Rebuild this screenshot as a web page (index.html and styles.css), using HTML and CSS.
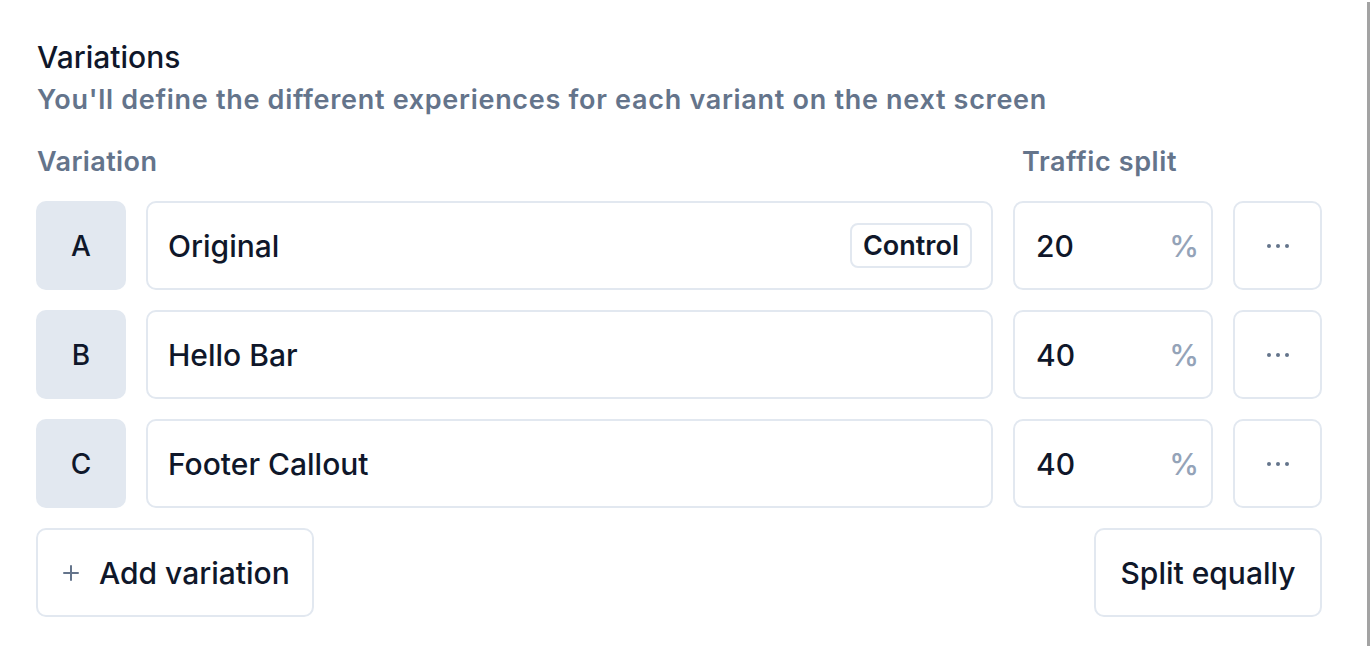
FILE: index.html
```html
<!DOCTYPE html>
<html lang="en">
<head>
<meta charset="utf-8">
<title>Variations</title>
<link rel="stylesheet" href="styles.css">
</head>
<body>
<div class="frame">
  <main class="content">
    <h2 class="title">Variations</h2>
    <p class="subtitle">You'll define the different experiences for each variant on the next screen</p>
    <div class="labels">
      <span class="label">Variation</span>
      <span class="label label-split">Traffic split</span>
    </div>
    <div class="rows">
      <div class="row">
        <div class="letter">A</div>
        <div class="name-input"><span>Original</span><span class="badge">Control</span></div>
        <div class="pct-input"><span>20</span><span class="pct">%</span></div>
        <button class="more" aria-label="More options">
          <svg width="24" height="6" viewBox="0 0 24 6"><circle cx="3" cy="3" r="2" fill="#64748b"/><circle cx="12" cy="3" r="2" fill="#64748b"/><circle cx="21" cy="3" r="2" fill="#64748b"/></svg>
        </button>
      </div>
      <div class="row">
        <div class="letter">B</div>
        <div class="name-input"><span>Hello Bar</span></div>
        <div class="pct-input"><span>40</span><span class="pct">%</span></div>
        <button class="more" aria-label="More options">
          <svg width="24" height="6" viewBox="0 0 24 6"><circle cx="3" cy="3" r="2" fill="#64748b"/><circle cx="12" cy="3" r="2" fill="#64748b"/><circle cx="21" cy="3" r="2" fill="#64748b"/></svg>
        </button>
      </div>
      <div class="row">
        <div class="letter">C</div>
        <div class="name-input"><span>Footer Callout</span></div>
        <div class="pct-input"><span>40</span><span class="pct">%</span></div>
        <button class="more" aria-label="More options">
          <svg width="24" height="6" viewBox="0 0 24 6"><circle cx="3" cy="3" r="2" fill="#64748b"/><circle cx="12" cy="3" r="2" fill="#64748b"/><circle cx="21" cy="3" r="2" fill="#64748b"/></svg>
        </button>
      </div>
    </div>
    <div class="actions">
      <button class="btn btn-add">
        <svg class="plus" width="18" height="18" viewBox="0 0 18 18"><path d="M9 2v14M2 9h14" stroke="#64748b" stroke-width="2" stroke-linecap="round"/></svg>
        <span>Add variation</span>
      </button>
      <button class="btn btn-split">Split equally</button>
    </div>
  </main>
  <div class="edge"></div>
</div>
</body>
</html>
```

FILE: styles.css
```css
html, body {
  margin: 0;
  padding: 0;
  background: #ffffff;
}
body {
  font-family: Inter, "Noto Sans", "Liberation Sans", sans-serif;
  color: #0f172a;
}
.frame {
  display: flex;
  height: 646px;
}
.content {
  flex: 1;
  padding: 37px 45px 0 36px;
  box-sizing: border-box;
}
.edge {
  width: 3px;
  margin-top: 2px;
  background: #a3a3a3;
}
.title {
  margin: 0 0 0 1px;
  font-size: 30px;
  line-height: 40px;
  font-weight: 500;
  color: #0f172a;
}
.subtitle {
  margin: 3px 0 0 1px;
  font-size: 27px;
  line-height: 40px;
  font-weight: 600;
  letter-spacing: 0.7px;
  color: #64748b;
}
.labels {
  display: flex;
  justify-content: space-between;
  margin-top: 22px;
  padding-left: 1px;
  height: 40px;
  align-items: center;
}
.label {
  font-size: 27px;
  font-weight: 600;
  color: #64748b;
  line-height: 40px;
  letter-spacing: 0.4px;
}
.label-split {
  width: 300px;
  letter-spacing: 0.6px;
}
.rows {
  display: flex;
  flex-direction: column;
  gap: 20px;
  margin-top: 19px;
}
.row {
  display: flex;
  gap: 20px;
  height: 89px;
}
.letter {
  width: 90px;
  flex: none;
  background: #e2e8f0;
  border-radius: 10px;
  display: flex;
  align-items: center;
  justify-content: center;
  font-size: 28px;
  font-weight: 500;
  color: #0f172a;
}
.name-input {
  flex: 1;
  border: 2px solid #e2e8f0;
  border-radius: 10px;
  display: flex;
  align-items: center;
  justify-content: space-between;
  padding: 0 19px 0 20px;
  font-size: 30px;
  font-weight: 500;
  color: #0f172a;
}
.badge {
  border: 2px solid #e2e8f0;
  border-radius: 8px;
  height: 45px;
  box-sizing: border-box;
  padding: 0 11px;
  display: flex;
  align-items: center;
  font-size: 27px;
  font-weight: 600;
}
.pct-input {
  width: 200px;
  flex: none;
  box-sizing: border-box;
  border: 2px solid #e2e8f0;
  border-radius: 10px;
  display: flex;
  align-items: center;
  justify-content: space-between;
  padding: 0 12px 0 21px;
  font-size: 30px;
  font-weight: 500;
  color: #0f172a;
}
.pct {
  color: #94a3b8;
  font-weight: 500;
}
.more {
  width: 89px;
  flex: none;
  box-sizing: border-box;
  border: 2px solid #e2e8f0;
  border-radius: 10px;
  background: #fff;
  display: flex;
  align-items: center;
  justify-content: center;
  padding: 0;
}
.actions {
  display: flex;
  justify-content: space-between;
  margin-top: 20px;
}
.btn {
  height: 89px;
  box-sizing: border-box;
  border: 2px solid #e2e8f0;
  border-radius: 10px;
  background: #fff;
  font-family: inherit;
  font-size: 30px;
  font-weight: 500;
  color: #0f172a;
  display: flex;
  align-items: center;
  white-space: nowrap;
}
.btn-add {
  width: 278px;
  gap: 19px;
  padding: 0 0 0 24px;
}
.plus {
  flex: none;
}
.btn-split {
  width: 228px;
  justify-content: center;
  padding: 0;
}
```
